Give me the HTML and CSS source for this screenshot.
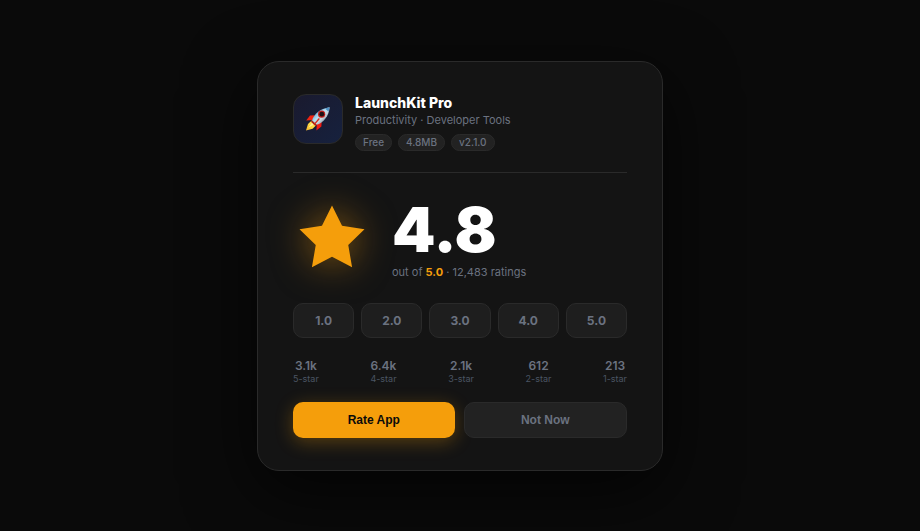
FILE: index.html
```html
<!DOCTYPE html>
<html lang="en">
	<head>
		<meta charset="UTF-8" />
		<meta name="viewport" content="width=device-width, initial-scale=1.0" />
		<title>LaunchKit Pro</title>
		<link rel="stylesheet" href="styles.css">
	</head>
	<body>
		<main class="card">
			<header class="app">
				<div class="app-icon">
					<svg width="26" height="26" viewBox="0 0 26 26" aria-hidden="true">
						<defs>
							<linearGradient id="hull" x1="0" y1="0" x2="1" y2="1">
								<stop offset="0.2" stop-color="#4f9fd0" />
								<stop offset="0.45" stop-color="#b9dcee" />
								<stop offset="0.6" stop-color="#c9d6de" />
								<stop offset="0.85" stop-color="#5c7488" />
							</linearGradient>
							<linearGradient id="flame" x1="1" y1="0" x2="0" y2="1">
								<stop offset="0" stop-color="#ff8a1c" />
								<stop offset="0.4" stop-color="#ffe14a" />
								<stop offset="1" stop-color="#f5b32b" />
							</linearGradient>
						</defs>
						<path d="M10 9.2 5 9.4 1.2 14.4 7.4 14Z" fill="#f02412" />
						<path d="M16.6 15.8 16.4 20.6 11.4 24.6 11.8 18.4Z" fill="#f01a12" />
						<path d="M7 14.2 3 18 1 24.6 7.6 22.8 11.6 18.8Z" fill="url(#flame)" />
						<path d="M7 16.8 3.6 21.6 9 18.6Z" fill="#fff3a0" />
						<path d="M7 14.4C9 8 15 2.6 24.6 1.2 24 10 18.4 16.8 11.6 18.8Z" fill="url(#hull)" />
						<path d="M20 2.4 24.6 1.2 23.6 5.8Z" fill="#4d91c4" />
						<path d="M7 14.4 11.6 18.8 10.4 20 6 15.8Z" fill="#a91d18" />
						<circle cx="16.6" cy="8.2" r="3.6" fill="#c4201c" />
						<circle cx="16.8" cy="8.2" r="2.4" fill="#1d1216" />
						<path d="M13.8 12 8.6 18.2 10 18.6 14.8 13Z" fill="#d92a19" />
					</svg>
				</div>
				<div class="app-info">
					<h1>LaunchKit Pro</h1>
					<p class="category">Productivity · Developer Tools</p>
					<ul class="tags">
						<li>Free</li>
						<li>4.8MB</li>
						<li>v2.1.0</li>
					</ul>
				</div>
			</header>

			<section class="rating">
				<svg class="star" width="78" height="78" viewBox="0 0 24 24" aria-hidden="true">
					<path
						d="M12 2 15.09 8.26 22 9.27 17 14.14 18.18 21.02 12 17.77 5.82 21.02 7 14.14 2 9.27 8.91 8.26Z"
						fill="#f59e0b"
					/>
				</svg>
				<div>
					<div class="score">4.8</div>
					<p class="score-note">out of <strong>5.0</strong> · 12,483 ratings</p>
				</div>
			</section>

			<div class="choices">
				<button type="button">1.0</button>
				<button type="button">2.0</button>
				<button type="button">3.0</button>
				<button type="button">4.0</button>
				<button type="button">5.0</button>
			</div>

			<dl class="stats">
				<div><dt>5-star</dt><dd>3.1k</dd></div>
				<div><dt>4-star</dt><dd>6.4k</dd></div>
				<div><dt>3-star</dt><dd>2.1k</dd></div>
				<div><dt>2-star</dt><dd>612</dd></div>
				<div><dt>1-star</dt><dd>213</dd></div>
			</dl>

			<div class="actions">
				<button type="button" class="button primary">Rate App</button>
				<button type="button" class="button secondary">Not Now</button>
			</div>
		</main>
	</body>
</html>
```

FILE: styles.css
```css
:root {
	--accent: #f59e0b;
	--muted: #6b7280;
	--dim: #4b5563;
	--surface: #141414;
	--raised: #1e1e1e;
	--border: #2a2a2a;
}

* {
	box-sizing: border-box;
	margin: 0;
	padding: 0;
}

body {
	font-family: Inter, "Liberation Sans", sans-serif;
	background-color: #0a0a0a;
	color: white;
	display: flex;
	justify-content: center;
	align-items: center;
	min-height: 100vh;
}

.card {
	background: var(--surface);
	border: 1px solid var(--border);
	border-radius: 22px;
	box-shadow: 0 20px 70px rgba(0, 0, 0, 0.7);
	padding: 32px 35px;
	max-width: 406px;
	width: 100%;
}

.app {
	display: flex;
	gap: 12px;
	padding-bottom: 21px;
	border-bottom: 1px solid var(--border);
}

.app-icon {
	display: flex;
	justify-content: center;
	align-items: center;
	flex-shrink: 0;
	width: 50px;
	height: 50px;
	background: linear-gradient(135deg, #1a1a2e, #16213e);
	border: 1px solid var(--border);
	border-radius: 13px;
}

h1 {
	font-size: 14px;
	line-height: 17px;
	font-weight: 800;
}

.category {
	font-size: 11px;
	line-height: 14px;
	margin-top: 2px;
	color: var(--muted);
}

.tags {
	display: flex;
	gap: 6px;
	margin-top: 7px;
	list-style: none;
}

.tags li {
	background: #222;
	border: 1px solid var(--border);
	border-radius: 9px;
	padding: 0 7px;
	font-size: 10px;
	line-height: 15px;
	font-weight: 500;
	color: var(--muted);
}

.rating {
	display: flex;
	align-items: center;
	gap: 21px;
	margin-top: 24px;
}

.star {
	flex-shrink: 0;
	filter: drop-shadow(0 0 18px rgba(245, 158, 11, 0.5));
}

.score {
	font-size: 62px;
	line-height: 66px;
	font-weight: 900;
}

.score-note {
	font-size: 11px;
	line-height: 14px;
	margin-top: 2px;
	color: var(--muted);
}

.score-note strong {
	font-weight: 700;
	color: var(--accent);
}

.choices {
	display: flex;
	gap: 7px;
	margin-top: 24px;
}

.choices button {
	flex: 1;
	height: 35px;
	background: var(--raised);
	border: 1px solid var(--border);
	border-radius: 10px;
	font-family: inherit;
	font-size: 12px;
	font-weight: 700;
	color: var(--muted);
	cursor: pointer;
}

.stats {
	display: flex;
	justify-content: space-between;
	margin-top: 20px;
	text-align: center;
}

/* count sits above its label */
.stats div {
	display: flex;
	flex-direction: column-reverse;
}

.stats dd {
	font-size: 12px;
	line-height: 15px;
	font-weight: 600;
	color: var(--muted);
}

.stats dt {
	font-size: 9px;
	line-height: 12px;
	color: var(--dim);
}

.actions {
	display: flex;
	gap: 9px;
	margin-top: 17px;
}

.button {
	flex: 1;
	height: 36px;
	border: none;
	border-radius: 10px;
	font-family: "Liberation Sans", Arial, sans-serif;
	font-size: 12px;
	font-weight: 700;
	cursor: pointer;
}

.primary {
	background: var(--accent);
	color: #0a0a0a;
	box-shadow: 0 4px 18px rgba(245, 158, 11, 0.3);
}

.secondary {
	background: #222;
	border: 1px solid var(--border);
	color: var(--muted);
}
```
